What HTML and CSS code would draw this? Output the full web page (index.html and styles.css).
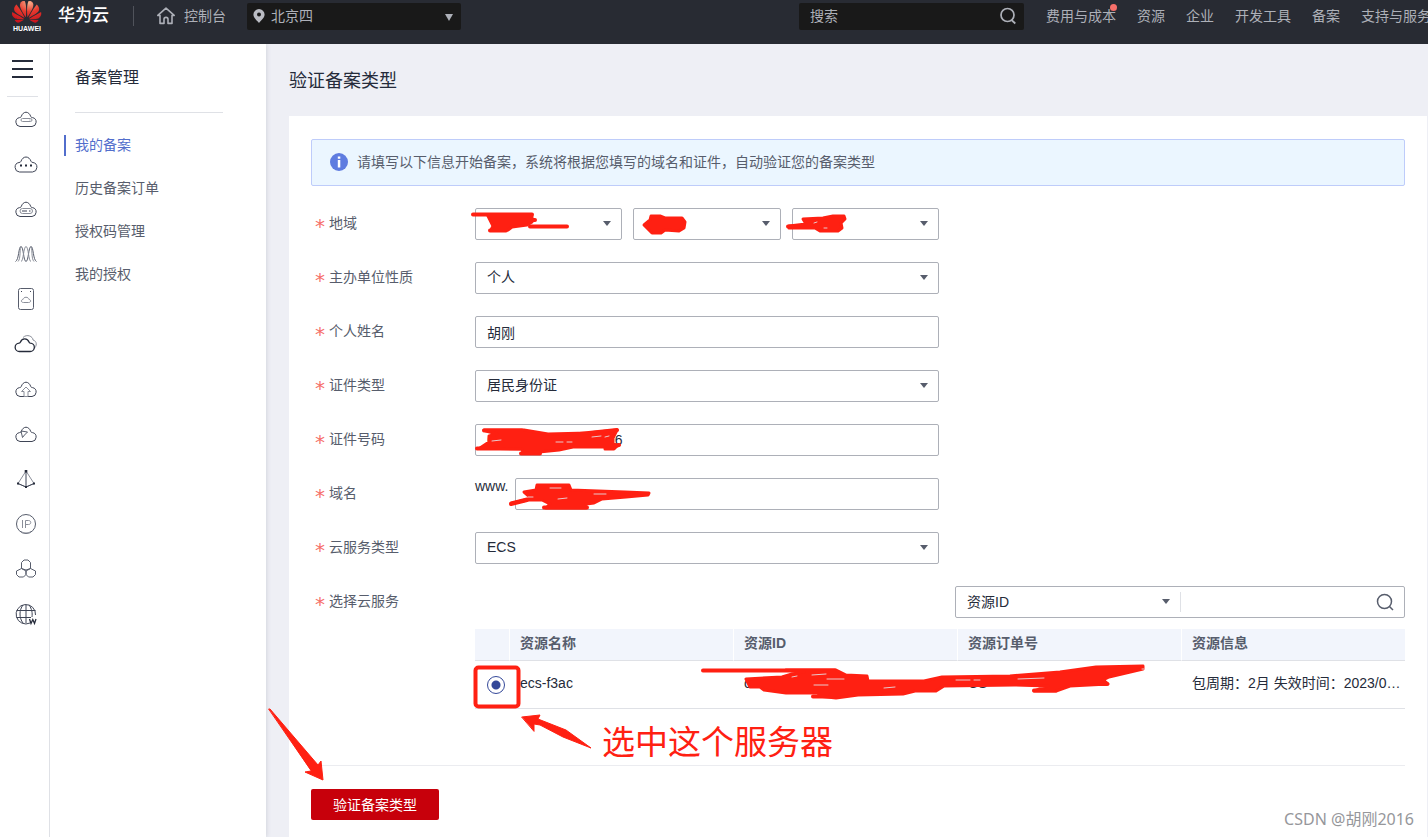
FILE: index.html
```html
<!DOCTYPE html>
<html lang="zh-CN">
<head>
<meta charset="utf-8">
<meta name="viewport" content="width=device-width, initial-scale=1">
<title>验证备案类型</title>
<link rel="stylesheet" href="styles.css">
</head>
<body>
<header class="topbar">
  <a class="brand" href="#">
    <svg class="logo" viewBox="0 0 30 31" width="30" height="31" role="img" aria-label="HUAWEI">
      <defs><radialGradient id="petal" cx="58%" cy="10%" r="90%"><stop offset="0" stop-color="#f9b08c"/><stop offset=".45" stop-color="#e6392e"/><stop offset="1" stop-color="#c8141d"/></radialGradient></defs>
      <g transform="translate(0 -4) scale(1.22)" fill="url(#petal)"><path d="M3.67 6.14S1.82 7.91 1.72 9.78v.35c.08 1.51 1.22 2.4 1.22 2.4 1.83 1.79 6.26 4.04 7.3 4.55 0 0 .06.03.1-.01l.02-.04v-.04C7.52 10.8 3.67 6.14 3.67 6.14zM9.65 18.6c-.02-.08-.1-.08-.1-.08l-7.38.26c.8 1.43 2.15 2.53 3.56 2.2.96-.25 3.16-1.78 3.88-2.3.06-.05.04-.09.04-.09zm.08-.78C6.49 15.63.21 12.28.21 12.28c-.15.46-.2.9-.21 1.3v.07c0 1.07.4 1.82.4 1.82.8 1.69 2.34 2.2 2.34 2.2.7.3 1.4.31 1.4.31.12.02 4.4 0 5.54 0 .05 0 .08-.05.08-.05v-.06c0-.03-.03-.05-.03-.05zM9.06 3.19a3.42 3.42 0 00-2.57 3.15v.41c.03.6.16 1.05.16 1.05.66 2.9 3.86 7.65 4.55 8.65.05.05.1.03.1.03a.1.1 0 00.06-.1c1.06-10.6-1.11-13.42-1.11-13.42-.32.02-1.19.23-1.19.23zm8.299 2.27s-.49-1.8-2.44-2.28c0 0-.57-.14-1.17-.22 0 0-2.18 2.81-1.12 13.43.01.07.06.08.06.08.07.03.1-.03.1-.03.72-1.03 3.9-5.76 4.55-8.64 0 0 .36-1.4.02-2.34zm-2.92 13.07s-.07 0-.09.05c0 0-.01.07.03.1.7.51 2.85 2 3.88 2.3 0 0 .16.05.43.06h.14c.69-.02 1.9-.37 3-2.26l-7.4-.25zm7.83-8.41c.14-2.06-1.94-3.97-1.94-3.98 0 0-3.85 4.66-6.67 10.8 0 0-.03.08.02.13l.04.01h.06c1.06-.53 5.46-2.77 7.28-4.54 0 0 1.15-.93 1.21-2.42zm1.52 2.14s-6.28 3.37-9.52 5.55c0 0-.05.04-.03.11 0 0 .03.06.07.06 1.16 0 5.56 0 5.67-.02 0 0 .57-.02 1.27-.29 0 0 1.56-.5 2.37-2.27 0 0 .73-1.45.17-3.14z"/></g>
      <text class="logo-text" x="15" y="30" text-anchor="middle">HUAWEI</text>
    </svg>
    <span class="brand-name">华为云</span>
  </a>
  <a class="console" href="#">
    <svg width="20" height="20" viewBox="0 0 20 20" fill="none" stroke="#adb0b8" stroke-width="1.6" stroke-linejoin="round"><path d="M10 2.2 1.8 9.4H4v8h4v-4.2c0-2.4 4-2.4 4 0v4.2h4v-8h2.200z"/></svg>
    <span>控制台</span>
  </a>
  <div class="region">
    <svg class="pin" width="12" height="14" viewBox="0 0 12 14"><path d="M6 0a5.600 5.600 0 0 1 5.600 5.600C11.600 9 8 11.500 6 14 4 11.500.4 9 .4 5.600A5.600 5.600 0 0 1 6 0z" fill="#babcc3"/><circle cx="6" cy="5.600" r="2" fill="#191919"/></svg>
    <select aria-label="区域"><option>北京四</option></select>
  </div>
  <div class="site-search">
    <input type="text" placeholder="搜索" aria-label="搜索">
    <button type="button" aria-label="开始搜索"><svg width="18" height="18" viewBox="0 0 18 18" fill="none" stroke="#adb0b8" stroke-width="1.700"><circle cx="8.500" cy="8" r="6.500"/><path d="m12.500 13 3.800 3.500"/></svg></button>
  </div>
  <nav class="topnav">
    <a class="has-dot" href="#">费用与成本</a><a href="#">资源</a><a href="#">企业</a><a href="#">开发工具</a><a href="#">备案</a><a href="#">支持与服务</a>
  </nav>
</header>

<div class="layout">
  <nav class="rail" aria-label="服务列表">
    <button class="burger" type="button" aria-label="展开菜单"><svg width="22" height="20" viewBox="0 0 22 20" stroke="#252b3a" stroke-width="2"><path d="M0 2h21M0 10h21M0 18h21"/></svg></button>
    <ul class="services">
      <li><a href="#" aria-label="弹性云服务器"><svg viewBox="0 0 24 24"><path class="d" d="M6 19.500a4.500 4.500 0 0 1-.5-8.900c1-.1 1.500-.3 1.800-1.200C8 7 10 5.200 12 5.200s4 1.800 4.700 4.200c.3.900.8 1.100 1.800 1.200a4.500 4.500 0 0 1-.5 8.900z"/><rect x="7" y="11.500" width="11" height="3" rx="1.500"/><path d="M15.500 13h1"/></svg></a></li>
      <li><a href="#" aria-label="云容器"><svg viewBox="0 0 24 24"><path class="d" d="M5.500 20a4.800 4.800 0 0 1-.5-9.500c1-.1 1.700-.3 2-1.200.8-2.500 2.800-4.300 5-4.300s4.200 1.800 5 4.300c.3.900 1 1.100 2 1.200a4.800 4.800 0 0 1-.5 9.500z"/><path class="f" d="M6 12.500h2v2H6zm5 0h2v2h-2zm5 0h2v2h-2z"/></svg></a></li>
      <li><a href="#" aria-label="裸金属服务器"><svg viewBox="0 0 24 24"><path class="d" d="M6 19.500a4.500 4.500 0 0 1-.5-8.900c1-.1 1.500-.3 1.800-1.200C8 7 10 5.200 12 5.200s4 1.800 4.700 4.200c.3.900.8 1.100 1.800 1.200a4.500 4.500 0 0 1-.5 8.900z"/><rect x="6" y="11.500" width="12.500" height="5" rx="2.500"/><path class="d" d="M8 14h5m2 0h1.500"/></svg></a></li>
      <li><a href="#" aria-label="弹性伸缩"><svg viewBox="0 0 24 24"><path class="m" d="M1.500 19.500C5 18 4.500 4.500 7 4.500s2.500 15 5 15 2.500-15 5-15 2 13.500 5.500 15"/><path d="M4 19.500C7 17 5.500 5 7 4.500M12 4.500c-2.500 0-2.500 15-5 15M12 4.500c2.500 0 2.500 15 5 15M20 19.500C17 17 18.500 5 17 4.500"/></svg></a></li>
      <li><a href="#" aria-label="云硬盘"><svg viewBox="0 0 24 24"><rect class="m" x="4.500" y="1.500" width="15" height="21" rx="2"/><path class="d" d="M7 4.500h1m8 0h1"/><path d="M9.500 15.500c-3 0-2.500-3-.5-3 .5-3 5.500-3 6 0 2 0 2.500 3-.5 3z"/></svg></a></li>
      <li><a href="#" aria-label="云备份"><svg viewBox="0 0 24 24"><path d="M9 5.500c4-4 10-1 10 2.500 4 1 4.500 6 .5 9"/><path class="b" d="M5.500 19.500a4.200 4.200 0 0 1-.3-8.400c.8 0 1-.3 1.300-1C8 5.500 13.500 6 15 10c.2.700.5 1 1.300 1.100a4.200 4.200 0 0 1-.3 8.400z"/></svg></a></li>
      <li><a href="#" aria-label="对象存储"><svg viewBox="0 0 24 24"><path class="d" d="M6 19.500a4.500 4.500 0 0 1-.5-8.900c1-.1 1.500-.3 1.800-1.200C8 7 10 5.200 12 5.200s4 1.800 4.700 4.200c.3.900.8 1.100 1.800 1.200a4.500 4.500 0 0 1-.5 8.900z"/><path d="m12 10-4.500 4.500H10v5h4v-5h2.500z"/></svg></a></li>
      <li><a href="#" aria-label="云监控"><svg viewBox="0 0 24 24"><path class="d" d="M6 19.500a4.500 4.500 0 0 1-.5-8.900c1-.1 1.500-.3 1.800-1.200C8 7 10 5.200 12 5.200s4 1.800 4.700 4.200c.3.900.8 1.100 1.800 1.200a4.500 4.500 0 0 1-.5 8.900z"/><path class="m" d="m7 9 1.500 6.500 2-2.500 3-3z"/></svg></a></li>
      <li><a href="#" aria-label="虚拟私有云"><svg viewBox="0 0 24 24"><path d="m12 4-8 12.500 8 3.500 8-3.500z"/><path class="d" d="M12 4v16m-8-3.500 8 3.500 8-3.500"/><path class="f" d="M10.700 3h2.600v2.600h-2.600zM3 15.500h2v2H3zm16 0h2v2h-2zm-8 3.500h2v2h-2z"/></svg></a></li>
      <li><a href="#" aria-label="弹性公网IP"><svg viewBox="0 0 24 24"><circle class="m" cx="12" cy="12" r="9.500"/><path d="M8.500 8v8M11.500 16V8.500h3c3 0 3 4 0 4h-3M7 19.500c3 2 7 2 10 0"/></svg></a></li>
      <li><a href="#" aria-label="域名注册"><svg viewBox="0 0 24 24"><path class="m" d="M7.500 11.500v-6L10 3h4l2.500 2.500v6L12 13zM7.500 11.500 12 14v3.500L9.500 20H5l-2.500-2.500V14zM16.500 11.500 12 14v3.500l2.500 2.500H19l2.500-2.500V14z"/></svg></a></li>
      <li><a href="#" aria-label="云解析"><svg viewBox="0 0 24 24"><path class="d" d="M21.500 13A9.700 9.700 0 1 0 16 21M12 2.500V21M2.500 8.500h19M2.500 15.500H17M9 3C5 8 5 16 9 21M15 3c3 4 3.500 8 3 12"/><path class="b" d="m15.500 17 1.500 4.500 1.800-4 1.700 4 1.500-4.500"/></svg></a></li>
    </ul>
  </nav>

  <aside class="sidebar">
    <h2>备案管理</h2>
    <ul>
      <li><a class="active" href="#" aria-current="page">我的备案</a></li>
      <li><a href="#">历史备案订单</a></li>
      <li><a href="#">授权码管理</a></li>
      <li><a href="#">我的授权</a></li>
    </ul>
  </aside>

  <main class="main">
    <h1>验证备案类型</h1>
    <form class="card">
      <div class="notice">
        <svg width="18" height="18" viewBox="0 0 18 18"><circle cx="9" cy="9" r="9" fill="#5e7ce0"/><path d="M7.800 3.500h2.500v2.200H7.800zM7.800 7h2.500v7.500H7.800z" fill="#fff"/></svg>
        <span>请填写以下信息开始备案，系统将根据您填写的域名和证件，自动验证您的备案类型</span>
      </div>

      <div class="row">
        <label class="label" for="province">地域</label>
        <div class="field triple">
          <div class="pick"><select id="province" aria-label="省"><option></option></select>
            <svg class="ink" width="110" height="32" viewBox="469 208 110 32"><path d="M473 214.500H532M532 220H535M530 226.500H567M490 230.500H506"/><path class="blob" d="M488 216H532L532 222 527 225 512 227 508 230H491L493 226z"/></svg></div>
          <div class="pick"><select aria-label="市"><option></option></select>
            <svg class="ink" width="110" height="32" viewBox="628 208 110 32"><path class="blob" d="m645 225 6-5 1-4 9 0 5 2h17l3 4-1 6-5 3-14-1-4 3-9 0-4-4z"/></svg></div>
          <div class="pick"><select aria-label="区"><option></option></select>
            <svg class="ink" width="110" height="32" viewBox="786 208 110 32"><path d="M788 226.500H815"/><path class="blob" d="m789 226 17-2-3-5 20-1 10-2 11 0 1 3-4 4 1 5-4 3-12 0-6 0-5-3-26 0z"/><path class="gap" d="m814 223 3-1m7 6h3"/></svg></div>
        </div>
      </div>
      <div class="row">
        <label class="label" for="nature">主办单位性质</label>
        <div class="field pick"><select id="nature"><option>个人</option></select></div>
      </div>
      <div class="row">
        <label class="label" for="name">个人姓名</label>
        <div class="field"><input id="name" type="text" value="胡刚"></div>
      </div>
      <div class="row">
        <label class="label" for="idtype">证件类型</label>
        <div class="field pick"><select id="idtype"><option>居民身份证</option></select></div>
      </div>
      <div class="row">
        <label class="label" for="idno">证件号码</label>
        <div class="field"><input id="idno" type="text" value="6**********************6">
          <svg class="ink" width="170" height="36" viewBox="469 424 170 36"><path d="M484 430.500H522M477 448.500H525M521 453.500H540M570 435 617 430M606 448 619 445"/><path class="blob" d="m484 430 40 0 24 4 40-1 29-3-4 8 0 5 4 3-3 3-9 0 0-2-32 0-14 3-20 2-16 1-1-4-42-1 9-6 0-6 8-2-11-3z"/><path class="gap" d="m492 441 9-1m55 2 7 0m4 0 5 0m20-5 9-1m4 1 4-1"/></svg></div>
      </div>
      <div class="row">
        <label class="label" for="domain">域名</label>
        <div class="field domain"><span class="prefix">www.</span>
          <div class="domain-box"><input id="domain" type="text" value="">
            <svg class="ink" width="150" height="36" viewBox="509 478 150 36"><path d="m511 504 16-4M544 507.500H587"/><path class="blob" d="m511 503 20-5-7-6 12-2 1-5 32 0 2 5 54 2 24 1-1 2-22 2-24 2-8 4-8 1 0 4-40 0 4-4-8-4-14 0z"/><path class="gap" d="m528 497 5 0m17-9 11 0m-3 11 9-1m27-4 12 0"/></svg></div>
        </div>
      </div>
      <div class="row">
        <label class="label" for="cloud">云服务类型</label>
        <div class="field pick"><select id="cloud"><option>ECS</option></select></div>
      </div>
      <div class="row last">
        <label class="label" for="filter">选择云服务</label>
        <div class="resources">
          <div class="filter">
            <div class="filter-key pick"><select id="filter"><option>资源ID</option></select></div>
            <input type="text" aria-label="资源ID">
            <button type="button" aria-label="查询"><svg width="18" height="18" viewBox="0 0 18 18" fill="none" stroke="#575d6c" stroke-width="1.500"><circle cx="8.500" cy="8.500" r="7"/><path d="m13.500 13.500 3.500 3.500"/></svg></button>
          </div>
          <div class="table-wrap">
            <table>
              <thead><tr><th class="choose"></th><th>资源名称</th><th>资源ID</th><th>资源订单号</th><th>资源信息</th></tr></thead>
              <tbody><tr>
                <td class="choose"><input type="radio" name="server" checked aria-label="ecs-f3ac"></td>
                <td>ecs-f3ac</td><td>c************</td><td>CS************</td>
                <td>包周期：2月 失效时间：2023/0…</td>
              </tr></tbody>
            </table>
            <svg class="table-ink" width="680" height="140" viewBox="473 629 680 140">
              <rect x="475.500" y="667.500" width="43" height="39" rx="3" fill="none" stroke="#ff2012" stroke-width="4"/>
              <path d="M703 670.500H835M813 696.500H835M748 681H780M1034 690.500H1056M1090 684H1107"/>
              <path class="blob" d="m746 679 36-2 10-3 12-2-18-2h50l10 5 21 1 1 5 56 0 18-4 68-1 50-4 36-5 47-1v3l-34 8-6 3 5 4-38 2-14 5h-22l14-5-34-1-70 1-8 5-21 0-12 3-45 1-22 3-18-2 10-3-42 0-22-3-4-3-10 0z"/>
              <path class="gap" d="m792 677 5-1m15-1 14-1m-12 11 14 0m-1-6 17 0m40 9 11-1m61-7 14 0m4 0 6 0m38-1 26-1m98-9 2 0"/>
              <path class="arrow" d="m522 717 18-2-2 4 28 11 25 18-28-11-23-12-6-1 0 7z"/>
            </svg>
            <strong class="tip">选中这个服务器</strong>
          </div>
        </div>
      </div>

      <div class="actions">
        <button class="submit" type="submit">验证备案类型</button>
        <svg class="point" width="60" height="76" viewBox="266 707 60 76"><path class="arrow" d="m269 709 1 0 48 56 3-4 2 19-18-8 6-1z"/></svg>
      </div>
    </form>
  </main>
</div>
<div class="watermark">CSDN @胡刚2016</div>
</body>
</html>
```

FILE: styles.css
```css
* { box-sizing: border-box; }
body {
  position: relative;
  display: flex;
  flex-direction: column;
  min-height: 100vh;
  margin: 0;
  overflow-x: hidden;
  background: #eeeff5;
  color: #252b3a;
  font: 14px/20px "Liberation Sans", "Noto Sans CJK SC", sans-serif;
}
a { color: inherit; text-decoration: none; }
ul { margin: 0; padding: 0; list-style: none; }
svg { display: block; flex: none; }
h1, h2 { margin: 0; font-weight: 400; }
button, input, select { margin: 0; font: inherit; color: inherit; border-radius: 0; }
button { padding: 0; border: 0; background: none; cursor: pointer; }
input, select { appearance: none; outline: 0; }

/* Top bar */
.topbar {
  position: relative;
  z-index: 1;
  display: flex;
  align-items: center;
  flex: none;
  height: 44px;
  padding: 0 0 12px 12px;
  background: #282b33;
  color: #adb0b8;
}
.brand { display: flex; align-items: center; gap: 16px; padding-right: 24px; }
.logo-text { fill: #fff; font: bold 7px "Liberation Sans", sans-serif; }
.brand-name { color: #fff; font-size: 17px; font-weight: 500; }
.console {
  display: flex;
  align-items: center;
  gap: 8px;
  padding: 0 21px 0 22px;
  border-left: 1px solid #50535b;
  white-space: nowrap;
}
.region {
  display: flex;
  align-items: center;
  position: relative;
  width: 214px;
  height: 27px;
  padding-left: 6px;
  border-radius: 2px;
  background: #191919;
}
.region select { flex: 1; height: 27px; padding: 0 6px; border: 0; background: none; }
.region::after {
  content: "";
  position: absolute;
  right: 8px;
  top: 11px;
  border: 4px solid transparent;
  border-top: 7px solid #adb0b8;
  border-bottom: 0;
  pointer-events: none;
}
.site-search {
  display: flex;
  align-items: center;
  width: 225px;
  height: 27px;
  margin-left: auto;
  padding: 0 7px 0 11px;
  border-radius: 2px;
  background: #191919;
}
.site-search input { flex: 1; min-width: 0; padding: 0; border: 0; background: none; }
.site-search input::placeholder { color: #adb0b8; opacity: 1; }
.topnav {
  display: flex;
  gap: 21px;
  width: 404px;
  padding: 6px 0 6px 22px;
  overflow: hidden;
  white-space: nowrap;
}
.topnav a { flex: none; }
.has-dot { position: relative; }
.has-dot::after {
  content: "";
  position: absolute;
  right: -1px;
  top: -2px;
  width: 7px;
  height: 7px;
  border-radius: 50%;
  background: #f66f6a;
}

/* Side areas */
.layout { display: flex; flex: 1; }
.rail {
  position: relative;
  z-index: 1;
  flex: none;
  width: 50px;
  border-right: 1px solid #dfe1e6;
  background: #fff;
}
.burger { display: flex; align-items: center; width: 49px; height: 52px; padding: 0 0 2px 12px; }
.services { margin: 0 11px 0 7px; border-top: 1px solid #dfe1e6; }
.services a { display: flex; align-items: center; justify-content: center; height: 45px; padding: 0 0 2px 6px; }
.services svg { width: 24px; height: 24px; fill: none; stroke: #8a8e99; stroke-width: 1; }
.services .m { stroke: #575d6c; }
.services .d { stroke: #3f4556; }
.services .b { stroke: #252b3a; stroke-width: 1.3; }
.services .f { fill: #252b3a; stroke: none; }
.sidebar {
  flex: none;
  width: 216px;
  padding: 24px 0 0 14px;
  background: #fff;
  box-shadow: 1px 0 4px #d3d5dd;
}
.sidebar h2 {
  margin: 0 43px 20px 11px;
  padding-bottom: 24px;
  border-bottom: 1px solid #dfe1e6;
  font-size: 16px;
  line-height: 20px;
}
.sidebar li { padding: 2px 0 20px; }
.sidebar li a {
  display: block;
  padding: 0 0 1px 9px;
  border-left: 2px solid transparent;
  color: #575d6c;
}
.sidebar li .active { border-color: #526ecc; color: #526ecc; }

/* Main area */
.main { display: flex; flex: 1; flex-direction: column; min-width: 0; padding: 25px 1px 0 23px; }
h1 { margin-bottom: 23px; font-size: 18px; line-height: 24px; }
.card { flex: 1; padding: 23px 22px 16px; background: #fff; }
.notice {
  display: flex;
  align-items: center;
  gap: 9px;
  min-height: 47px;
  margin-bottom: 22px;
  padding: 0 18px 2px;
  border: 1px solid #beccfa;
  border-radius: 2px;
  background: #ebf6ff;
  color: #575d6c;
}
.row { display: flex; margin-bottom: 22px; }
.row.last { margin-bottom: 56px; }
.label { flex: none; width: 164px; padding-left: 4px; color: #575d6c; line-height: 30px; }
.label::before {
  content: "*";
  display: inline-block;
  width: 14px;
  color: #f66f6a;
  font-family: "DejaVu Sans", sans-serif;
  font-size: 20px;
  line-height: 20px;
  vertical-align: -5px;
}
.field { position: relative; width: 464px; }
.field input, .field select {
  display: block;
  width: 100%;
  height: 32px;
  padding: 0 11px;
  border: 1px solid #adb0b8;
  border-radius: 2px;
  background: #fff;
}
.field select { padding-bottom: 2px; }
.triple { display: grid; grid-template-columns: repeat(3, 1fr); gap: 11px; }
.pick { position: relative; }
.pick::after {
  content: "";
  position: absolute;
  right: 11px;
  top: 13px;
  border: 4px solid transparent;
  border-top: 5px solid #575d6c;
  border-bottom: 0;
  pointer-events: none;
}
.domain { display: flex; gap: 8px; }
.prefix { width: 32px; line-height: 16px; }
.domain-box { position: relative; flex: 1; }

/* Resource table */
.resources { flex: 1; min-width: 0; }
.filter {
  display: flex;
  align-items: center;
  width: 450px;
  height: 32px;
  margin: 0 0 11px auto;
  padding-right: 10px;
  border: 1px solid #adb0b8;
  border-radius: 2px;
}
.filter-key { width: 225px; border-right: 1px solid #dfe1e6; }
.filter select { display: block; width: 100%; height: 20px; padding: 0 11px 2px; border: 0; background: none; }
.filter .pick::after { top: 7px; right: 10px; }
.filter input { flex: 1; min-width: 0; border: 0; background: none; }
.table-wrap { position: relative; }
table { width: 100%; table-layout: fixed; border-collapse: separate; border-spacing: 0; }
th, td {
  overflow: hidden;
  padding: 0 0 0 11px;
  border-bottom: 1px solid #dfe1e6;
  text-align: left;
  text-overflow: ellipsis;
  white-space: nowrap;
}
th { height: 32px; padding-bottom: 4px; background: #f2f5fc; color: #575d6c; font-weight: 700; }
th + th { border-left: 1px solid #fff; padding-left: 10px; }
td { height: 48px; padding-bottom: 3px; }
.choose { width: 34px; }
td.choose { padding: 0 0 0 12px; overflow: visible; }
td input {
  display: block;
  width: 18px;
  height: 18px;
  border: 1px solid #344899;
  border-radius: 50%;
  background: radial-gradient(circle, #344899 4px, #fff 5px);
}

/* Hand-drawn marks */
.ink, .table-ink, .point { position: absolute; fill: none; stroke: #ff2012; stroke-width: 4; stroke-linecap: round; stroke-linejoin: round; pointer-events: none; }
.ink { left: -6px; top: 0; }
.table-ink { left: -2px; top: 0; }
.blob { fill: #ff2012; stroke-width: 3; }
.gap { stroke: #e9c9cc; stroke-width: 1; }
.arrow { fill: #ff2012; stroke-width: 1; }
.tip {
  position: absolute;
  left: 127px;
  top: 94px;
  color: #ff2012;
  font-size: 33px;
  font-weight: 400;
  line-height: 40px;
}
.actions { position: relative; padding-top: 23px; border-top: 1px solid #ebecf0; }
.submit { display: block; min-width: 128px; height: 31px; border-radius: 2px; background: #c7000b; color: #fff; }
.point { left: -45px; top: -59px; }
.watermark {
  position: absolute;
  right: 14px;
  bottom: 6px;
  color: #96979b;
  font: 16px/24px "Noto Sans", "Noto Sans CJK SC", sans-serif;
}
```
